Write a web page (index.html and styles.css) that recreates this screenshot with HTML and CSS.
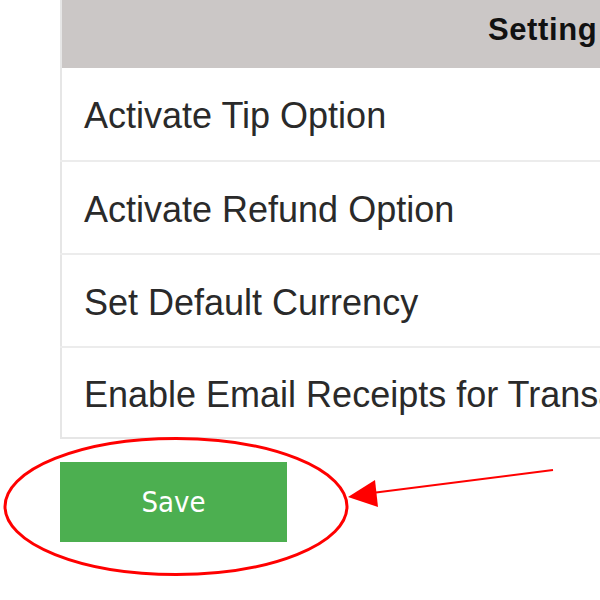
FILE: index.html
```html
<!DOCTYPE html>
<html>
<head>
<meta charset="utf-8">
<link rel="stylesheet" href="styles.css">
</head>
<body>
<div class="page">
  <table class="settings">
    <thead>
      <tr><th class="head">Setting</th><th class="head2">Status</th></tr>
    </thead>
    <tbody>
      <tr><td>Activate Tip Option</td><td></td></tr>
      <tr><td>Activate Refund Option</td><td></td></tr>
      <tr><td>Set Default Currency</td><td></td></tr>
      <tr><td>Enable Email Receipts for Transactions</td><td></td></tr>
    </tbody>
  </table>
  <button class="save">Save</button>
</div>
<svg class="annot" width="600" height="600" viewBox="0 0 600 600">
  <ellipse cx="176" cy="506.5" rx="171" ry="68" fill="none" stroke="#f00" stroke-width="3"/>
  <line x1="553" y1="470" x2="372" y2="493" stroke="#f00" stroke-width="2"/>
  <polygon points="348,497 375,480 378,507" fill="#f00"/>
</svg>
</body>
</html>
```
FILE: styles.css
```css
html, body {
  margin: 0;
  padding: 0;
  background: #fff;
  overflow: hidden;
}
body {
  width: 600px;
  height: 600px;
  position: relative;
  font-family: "Liberation Sans", Arial, sans-serif;
  color: #222;
}
.page {
  padding-left: 60px;
  width: 1200px;
}
.settings {
  border-collapse: collapse;
  width: 1000px;
  border-left: 2px solid #e6e6e6;
  border-bottom: 2px solid #e6e6e6;
}
.settings th {
  background: #cbc7c6;
  height: 68px;
  box-sizing: border-box;
  text-align: left;
  font-size: 31px;
  font-weight: bold;
  letter-spacing: 0.6px;
  color: #111;
  line-height: 40px;
  vertical-align: bottom;
  padding-bottom: 18px;
}
.settings th.head {
  width: 650px;
  padding-left: 426px;
}
.settings th.head2 {
  padding-left: 40px;
}
.settings td {
  height: 93px;
  box-sizing: border-box;
  padding: 4px 0 0 22px;
  font-size: 36px;
  color: #2a2a2a;
  border-top: 2px solid #ececec;
  vertical-align: middle;
  white-space: nowrap;
}
.settings tbody tr:first-child td {
  border-top: none;
}
.settings tbody tr:last-child td {
  height: 91px;
}
.save {
  display: block;
  margin-top: 23px;
  width: 227px;
  height: 80px;
  background: #4caf50;
  border: none;
  color: #fff;
  font-family: "DejaVu Sans Condensed", "DejaVu Sans", sans-serif;
  font-stretch: condensed;
  font-size: 29px;
  padding: 0;
}
.annot {
  position: absolute;
  left: 0;
  top: 0;
  pointer-events: none;
}
```
